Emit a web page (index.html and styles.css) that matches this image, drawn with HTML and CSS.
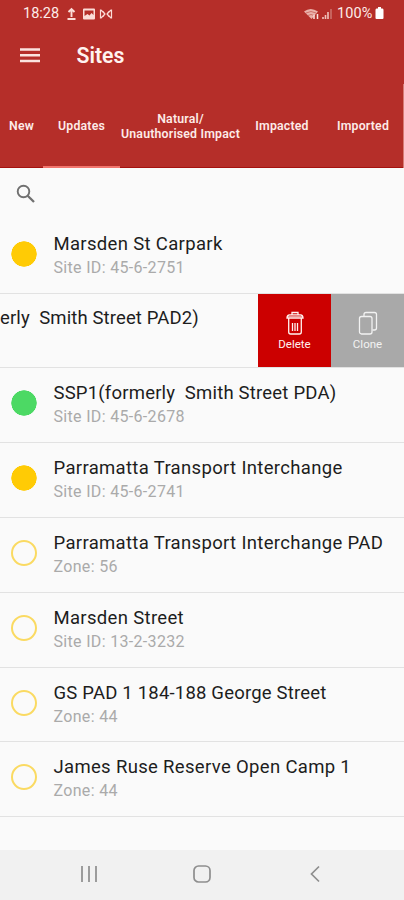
FILE: index.html
```html
<!DOCTYPE html>
<html lang="en">
<head>
<meta charset="utf-8">
<title>Sites</title>
<link rel="stylesheet" href="styles.css">
</head>
<body>
<header class="header">
  <div class="status">
    <span class="clock">18:28</span>
    <svg class="status-left" width="50" height="14" viewBox="0 0 50 14" fill="none" stroke="#fbdcd7">
      <path d="M5.500 10V2M2.500 5l3-3 3 3M1.500 12h8" stroke-width="1.900"/>
      <path fill="#fbdcd7" stroke="none" fill-rule="evenodd" d="M18 1.500h10q1 0 1 1v9q0 1-1 1H18q-1 0-1-1v-9q0-1 1-1zM18.500 3.500v5.500l3-2 2 1.500 2-2.500 2 2V3.500z"/>
      <path d="M34.500 2.500v9M45.500 2.500v9M35 3l4 4-4 4M45 3l-4 4 4 4M37 4.500Q40 7 37 9.500M43 4.500Q40 7 43 9.500" stroke-width="1.200"/>
    </svg>
    <span class="grow"></span>
    <svg class="signals" width="32" height="14" viewBox="0 0 32 14">
      <path d="M1 4.500Q7.500-.500 15 4.500L8.500 12z" fill="#eab1aa"/>
      <path d="M3 6q5-3 10 0M5 8.500q3-2 6 0" fill="none" stroke="#b52e29" stroke-width=".5"/>
      <path d="M11 12V8M14.500 12V7" stroke="#fbe4df" stroke-width="1.500"/>
      <path d="M20 12v-2M22.500 12V8M25 12V5" stroke="#f1c2bb" stroke-width="1.600"/>
      <path d="M28 12V2" stroke="#cc706a" stroke-width="1.600"/>
    </svg>
    <span class="percent">100%</span>
    <svg class="battery" width="9" height="13" viewBox="0 0 9 13"><path d="M3 0h3v1.500h1.500Q8.500 1.500 8.500 3v8q0 1-1 1h-6q-1 0-1-1V3q0-1.500 1-1.500H3z" fill="#fff"/></svg>
  </div>
  <div class="appbar">
    <svg width="20" height="16" viewBox="0 0 20 16"><path d="M0 1.500h20M0 7.300h20M0 13.100h20" stroke="#fbe3df" stroke-width="2.500"/></svg>
    <h1 class="title">Sites</h1>
  </div>
  <nav class="tabs">
    <div class="tab tab-new">New</div>
    <div class="tab tab-updates">Updates</div>
    <div class="tab tab-natural">Natural/<br>Unauthorised Impact</div>
    <div class="tab tab-impacted">Impacted</div>
    <div class="tab tab-imported">Imported</div>
    <div class="tab-edge"></div>
  </nav>
</header>
<div class="search">
  <svg width="20" height="20" viewBox="0 0 20 20" fill="none" stroke="#707070"><circle cx="7.500" cy="7.500" r="5.800" stroke-width="1.900"/><path d="M11.700 11.700l6.300 6.300" stroke-width="2.300"/></svg>
</div>
<main class="list">
  <div class="row"><i class="dot yellow"></i><div class="text"><div class="name">Marsden St Carpark</div><div class="sub">Site ID: 45-6-2751</div></div></div>
  <div class="row swiped">
    <div class="swiped-text"><div class="name snug">erly&nbsp; Smith Street PAD2)</div></div>
    <div class="action delete">
      <svg width="18" height="25" viewBox="0 0 18 25" fill="none" stroke="#fff2ef" stroke-width="1.300"><path d="M6 3.500V1.500h6v2M1 7q0-3.200 2.500-3.200h11q2.500 0 2.500 3.200zM2.700 7.500V21q0 2 2 2h8.600q2 0 2-2V7.500"/><path d="M6.500 12v8M9 12v8M11.500 12v8" stroke-width="1.300"/><path d="M2 5.500h14" stroke-opacity=".6"/></svg>
      <span>Delete</span>
    </div>
    <div class="action clone">
      <svg width="20" height="25" viewBox="0 0 20 25" fill="none" stroke="#f2f2f2" stroke-width="1.300"><rect x="1.500" y="5.500" width="12.500" height="17.500" rx="2"/><path d="M6 5V3.500q0-2 2-2h8.500q2 0 2 2V17q0 2-2 2H14.500"/></svg>
      <span>Clone</span>
    </div>
  </div>
  <div class="row"><i class="dot green"></i><div class="text"><div class="name medium">SSP1(formerly&nbsp; Smith Street PDA)</div><div class="sub">Site ID: 45-6-2678</div></div></div>
  <div class="row"><i class="dot yellow"></i><div class="text"><div class="name">Parramatta Transport Interchange</div><div class="sub">Site ID: 45-6-2741</div></div></div>
  <div class="row"><i class="dot ring"></i><div class="text"><div class="name">Parramatta Transport Interchange PAD</div><div class="sub">Zone: 56</div></div></div>
  <div class="row"><i class="dot ring"></i><div class="text"><div class="name">Marsden Street</div><div class="sub">Site ID: 13-2-3232</div></div></div>
  <div class="row"><i class="dot ring"></i><div class="text"><div class="name medium">GS PAD 1 184-188 George Street</div><div class="sub">Zone: 44</div></div></div>
  <div class="row"><i class="dot ring"></i><div class="text"><div class="name">James Ruse Reserve Open Camp 1</div><div class="sub">Zone: 44</div></div></div>
</main>
<footer class="navbar">
  <svg width="18" height="18" viewBox="0 0 18 18"><path d="M2 1v16M9 1v16M16 1v16" stroke="#8e8e8e" stroke-width="1.700"/></svg>
  <svg width="18" height="18" viewBox="0 0 18 18"><rect x="1" y="1" width="16" height="16" rx="4.500" fill="none" stroke="#8e8e8e" stroke-width="1.700"/></svg>
  <svg width="18" height="18" viewBox="0 0 18 18"><path d="M13 1.500L5.500 9l7.500 7.500" fill="none" stroke="#8e8e8e" stroke-width="1.700"/></svg>
</footer>
</body>
</html>
```
FILE: styles.css
```css
* { box-sizing: border-box; }
body {
  margin: 0;
  width: 404px;
  height: 900px;
  overflow: hidden;
  display: flex;
  flex-direction: column;
  background: #fafafa;
  font-family: Roboto, sans-serif;
}
svg { display: block; flex: none; }
.header { flex: none; height: 167.500px; background: #b52e29; color: #fdebe8; }
.status { height: 27px; display: flex; align-items: center; padding: 0 20px 0 23px; font-size: 14.500px; }
.clock { width: 42px; }
.status-left { margin-left: 1px; }
.grow { flex: 1; }
.signals { margin-right: 2px; }
.percent { width: 37px; white-space: nowrap; letter-spacing: .1px; }
.battery { margin-left: 1px; }
.appbar { height: 57px; display: flex; align-items: center; padding-left: 20px; gap: 36.500px; }
.title { margin: 0; font-size: 21.200px; font-weight: 600; line-height: 28px; padding-top: 1px; color: #fff3f0; }
.tabs { height: 83.500px; display: flex; font-size: 12.300px; font-weight: 600; letter-spacing: .2px; line-height: 15px; text-align: center; }
.tab { display: flex; align-items: center; justify-content: center; padding-top: 3px; white-space: nowrap; border-bottom: 1px solid #a5120f; }
.tab-new { width: 43px; }
.tab-updates { width: 77px; border-bottom: 2.500px solid #f2756e; padding-top: 4px; }
.tab-natural { width: 121px; }
.tab-impacted { width: 82px; }
.tab-imported { width: 80px; }
.tab-edge { width: 1px; background: #d77b75; }
.search { flex: none; height: 51.300px; padding: 16px 0 0 16px; }
.list { flex: none; display: grid; grid-auto-rows: 74.800px; }
.row { display: flex; border-bottom: 1px solid #e2e2e2; min-width: 0; }
.dot { flex: none; width: 26px; height: 26px; margin: 22px 16.500px 0 11px; border-radius: 50%; }
.yellow { background: radial-gradient(circle, #ffcb05 12.400px, transparent 13px); }
.green { background: radial-gradient(circle, #4cd964 12.400px, transparent 13px); }
.ring { border: 2px solid #fada62; }
.text { padding-top: 12px; }
.name { font-size: 18.500px; line-height: 26px; letter-spacing: .33px; color: #1d1d1d; white-space: nowrap; }
.medium { letter-spacing: .2px; }
.snug { letter-spacing: .12px; }
.sub { font-size: 16px; line-height: 22px; letter-spacing: .32px; color: #aaa; white-space: nowrap; }
.swiped-text { width: 258px; padding-top: 11.500px; }
.action { width: 73px; display: flex; flex-direction: column; align-items: center; padding-top: 17px; font-size: 11.500px; line-height: 14px; color: #fff2ef; gap: 1px; }
.delete { background: #cc0000; }
.clone { background: #a9a9a9; color: #f2f2f2; }
.navbar { flex: none; margin-top: auto; height: 50px; background: #f1f1f1; display: flex; justify-content: space-between; align-items: center; padding: 0 80px 2px 80px; }
```
